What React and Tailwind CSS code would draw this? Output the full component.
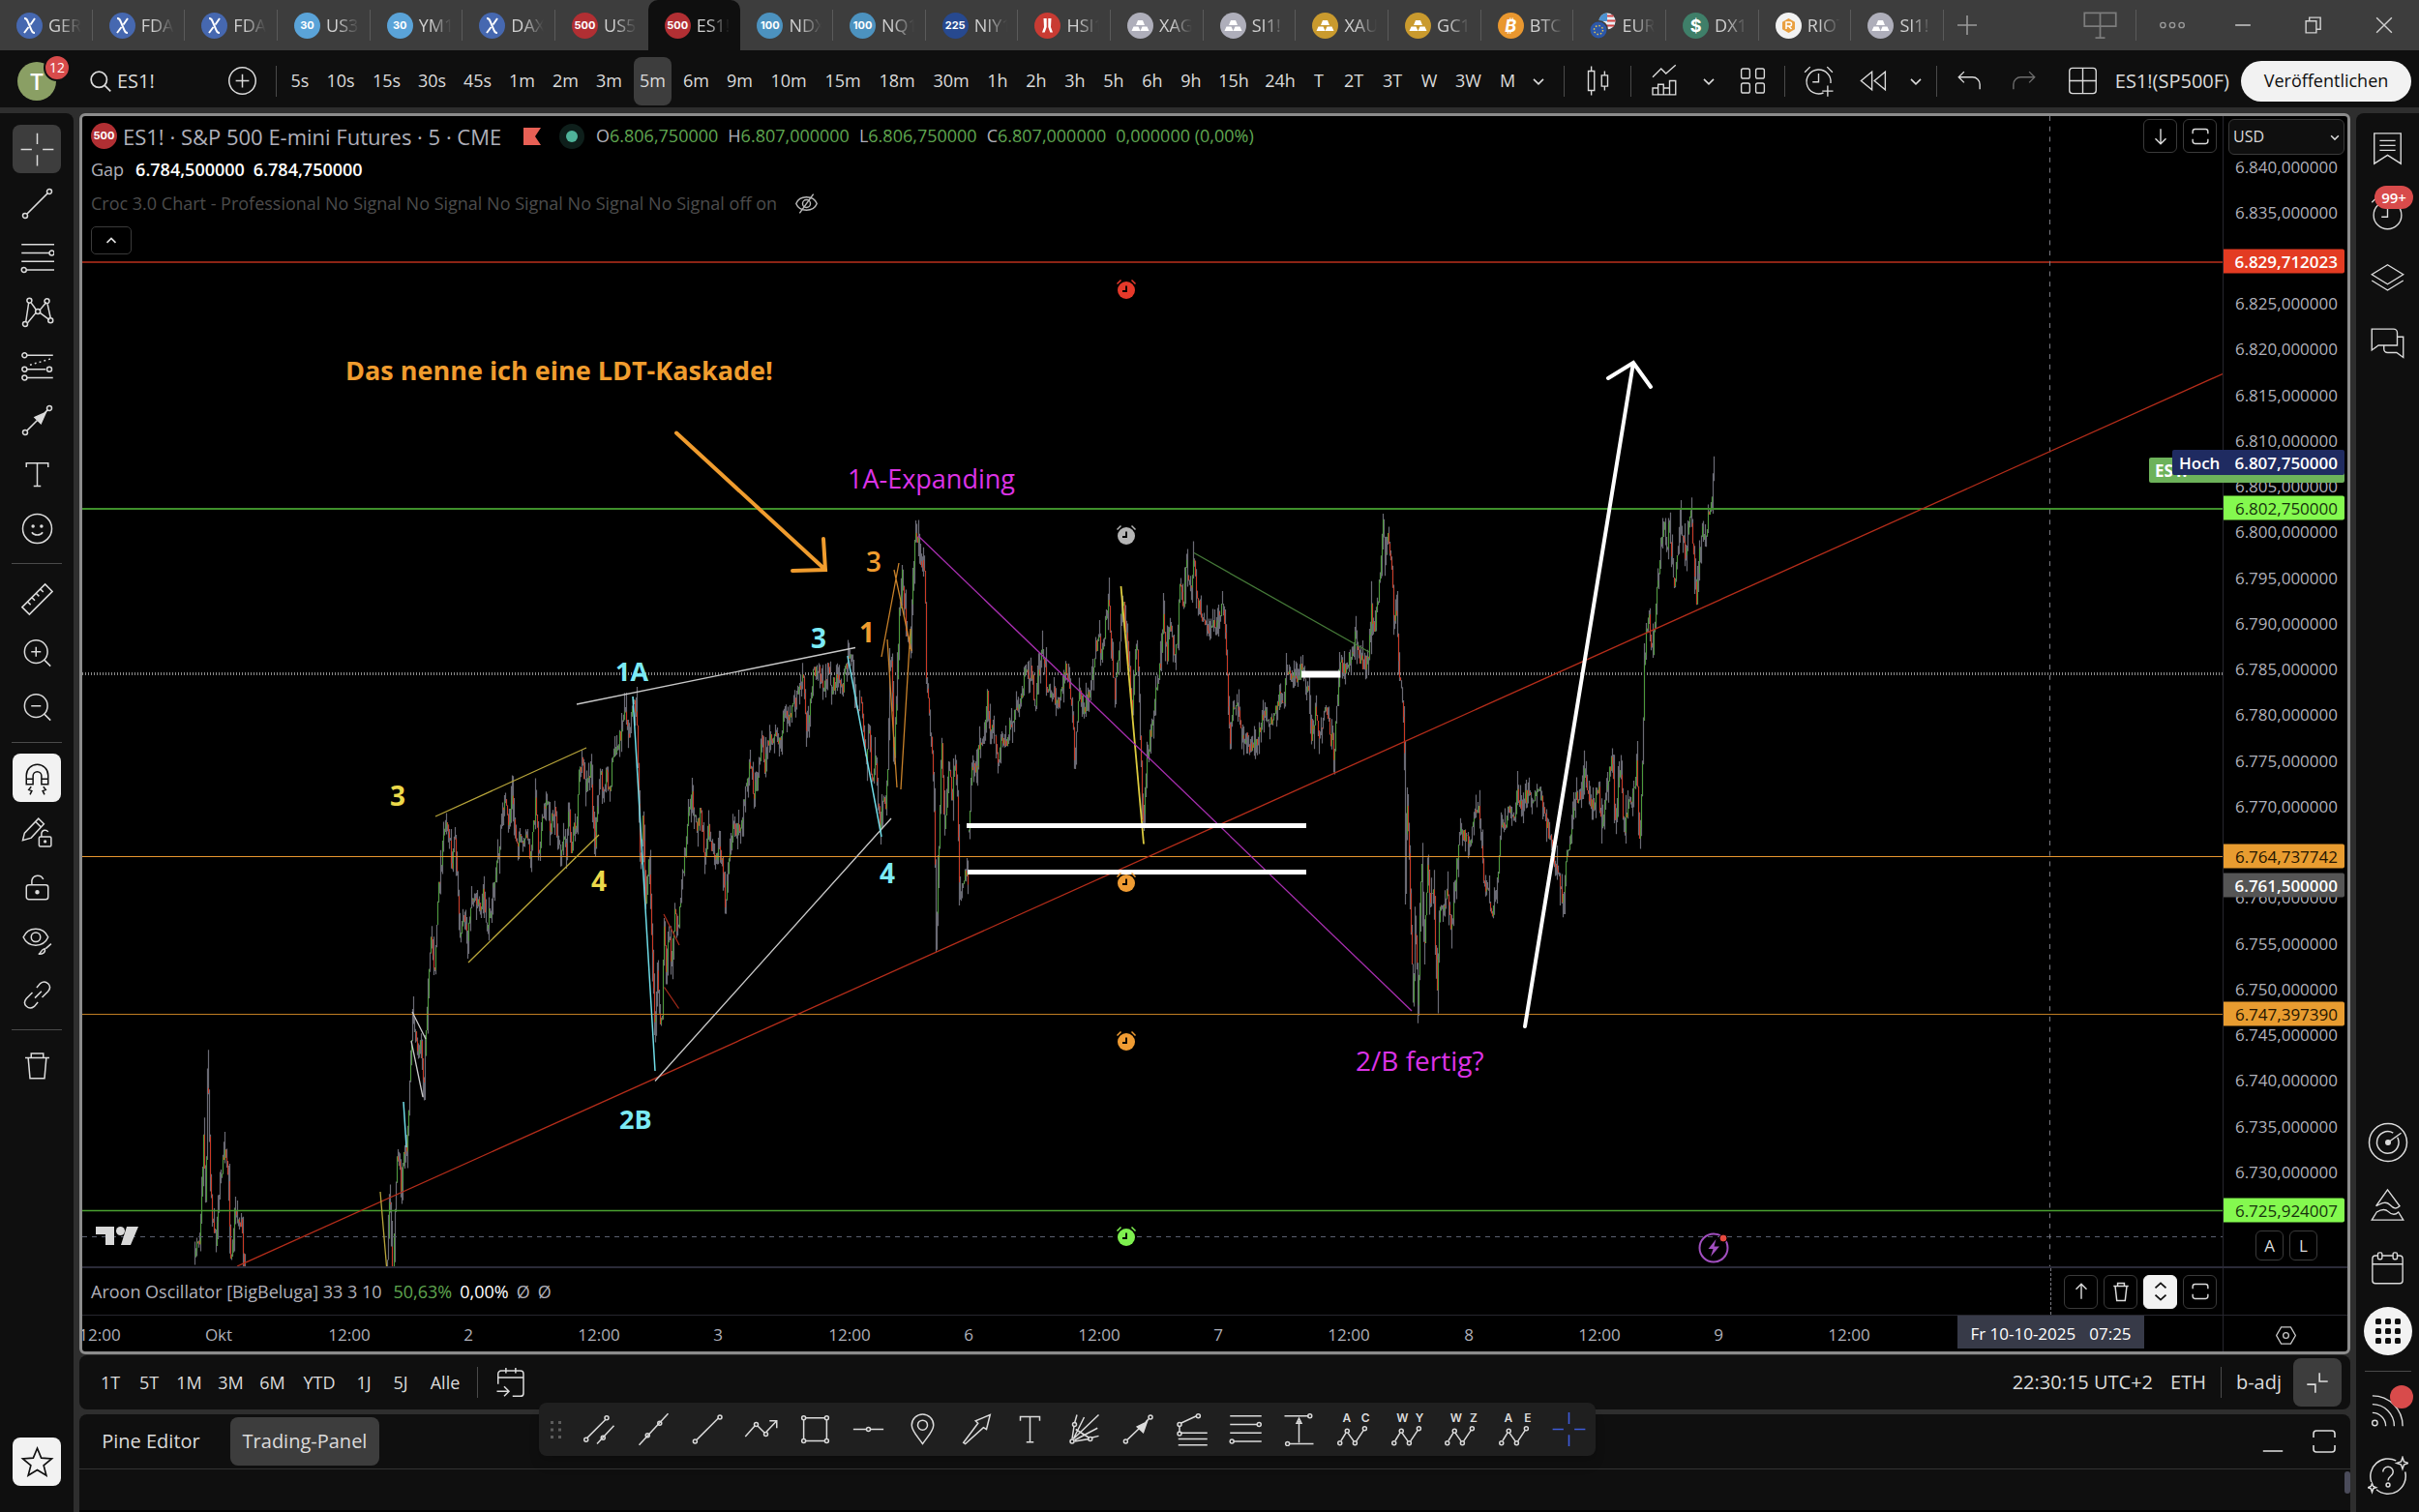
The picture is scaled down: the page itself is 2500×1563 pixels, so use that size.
import React from "react";

/* ---------- small helpers ---------- */

function Ico({ children, size = "size-[35px]", w = 1.1, className = "" }) {
  return (
    <svg viewBox="0 0 28 28" className={`shrink-0 ${size} ${className}`} fill="none" stroke="currentColor" strokeWidth={w} aria-hidden="true">
      {children}
    </svg>
  );
}

const Dot = ({ x, y, r = 1.6 }) => <circle cx={x} cy={y} r={r} />;

const Chevron = () => (
  <Ico size="size-[20px]" w={2.2}>
    <path d="M7 11l7 7 7-7" />
  </Ico>
);

const Bar = ({ className = "" }) => <div className={`h-8 w-px shrink-0 bg-[#4a4a4a] ${className}`} />;

/* ---------- symbol logos ---------- */

function Badge({ kind }) {
  const numbers = {
    "30": "bg-[#5aa3d8]",
    "500": "bg-[#b12f33]",
    "100": "bg-[#4c92bf]",
    "225": "bg-[#27498f]",
  };
  const base = "flex size-[27px] shrink-0 items-center justify-center rounded-full text-white";
  if (numbers[kind]) {
    return <span className={`${base} ${numbers[kind]} font-['Inter',sans-serif] text-[11px] font-bold`}>{kind}</span>;
  }
  if (kind === "x") {
    return (
      <span className={`${base} bg-[#4668b0]`}>
        <svg viewBox="0 0 27 27" className="size-[27px]" fill="none" stroke="#fff" strokeWidth="2" aria-hidden="true">
          <path d="M8 6c3 0 3 2 5.500 7.500S16 21 19 21M19 6l-4.500 6.500M12.500 15L8 21" />
        </svg>
      </span>
    );
  }
  if (kind === "silver" || kind === "gold") {
    return (
      <span className={`${base} ${kind === "gold" ? "bg-[#c99a2e]" : "bg-[#aeaeba]"}`}>
        <svg viewBox="0 0 27 27" className="size-[27px]" fill="#fff" aria-hidden="true">
          <path d="M11 8h5l2 5H9zM6.500 14.500h5l2 4.500h-9zM15.500 14.500h5l2 4.500h-9z" />
        </svg>
      </span>
    );
  }
  if (kind === "hsi") {
    return (
      <span className={`${base} bg-[#c93b33]`}>
        <svg viewBox="0 0 27 27" className="size-[27px]" fill="#fff" aria-hidden="true">
          <path d="M9.500 6h3.200v9l-2 5.500H8l2-5.500zM14.300 6h3.200l-.5 9 2 5.500h-2.700l-2-5.500z" />
        </svg>
      </span>
    );
  }
  if (kind === "btc") {
    return <span className={`${base} bg-[#e9972f] font-['Inter',sans-serif] text-[18px] font-bold italic`}>₿</span>;
  }
  if (kind === "dx") {
    return <span className={`${base} bg-[#3f7f69] font-['Inter',sans-serif] text-[18px] font-bold`}>$</span>;
  }
  if (kind === "riot") {
    return (
      <span className={`${base} bg-[#f2f2f2]`}>
        <svg viewBox="0 0 27 27" className="size-[27px]" fill="none" aria-hidden="true">
          <path d="M13.500 6l6.500 3.700v7.600L13.500 21 7 17.300V9.700z" fill="#e9a040" />
          <path d="M11 17v-7h3.500a2 2 0 010 4H11m2.500 0l3 3" stroke="#fff" strokeWidth="1.500" />
        </svg>
      </span>
    );
  }
  return (
    <svg viewBox="0 0 27 27" className="size-[27px] shrink-0" aria-hidden="true">
      <circle cx="18" cy="9" r="8.500" fill="#e9eef5" />
      <path d="M18 .5a8.500 8.500 0 00-8.500 8.500H18z" fill="#4c92d0" />
      <path d="M18 3.500h6.500M18 8.500h8.500M11 13.500h14" stroke="#d34545" strokeWidth="2" />
      <circle cx="9.500" cy="17.500" r="9.500" fill="#3d3d3d" />
      <circle cx="9" cy="18" r="8.500" fill="#2c57a8" />
      <circle cx="9" cy="18" r="4.500" fill="none" stroke="#e8c84f" strokeWidth="1.500" strokeDasharray="1.500 2" />
    </svg>
  );
}

const tabs = [
  ["x", "GER4"], ["x", "FDAX"], ["x", "FDAX"], ["30", "US30"], ["30", "YM1!"], ["x", "DAX"], ["500", "US50"],
  ["500", "ES1!"], ["100", "NDX"], ["100", "NQ1!"], ["225", "NIY1"], ["hsi", "HSI1"], ["silver", "XAGU"],
  ["silver", "SI1!"], ["gold", "XAUU"], ["gold", "GC1!"], ["btc", "BTCU"], ["eur", "EURU"], ["dx", "DX1!"],
  ["riot", "RIOT"], ["silver", "SI1!"],
];

function TabStrip() {
  return (
    <header className="flex h-[52px] shrink-0 bg-[#3d3d3d]">
      <nav className="flex min-w-0 flex-1">
        {tabs.map(([kind, name], i) => {
          const active = i === 7;
          const rule = !active && i !== 6;
          return (
            <button
              key={i}
              className={`flex min-w-0 flex-1 items-center ${active ? "rounded-t-[10px] bg-[#0f0f0f]" : ""}`}
            >
              <span className="flex min-w-0 flex-1 items-center gap-[6px] pl-[17px]">
                <Badge kind={kind} />
                <span className="w-[34px] overflow-hidden text-left text-[18px] font-medium text-[#d0d0d0] [mask-image:linear-gradient(to_right,black_35%,transparent)]">
                  {name}
                </span>
              </span>
              <span className={`h-8 w-px ${rule ? "bg-[#5a5a5a]" : ""}`} />
            </button>
          );
        })}
      </nav>
      <div className="flex w-[491px] items-center text-[#9a9a9a]">
        <button aria-label="Neuer Tab" className="flex w-12 justify-center">
          <Ico size="size-[28px]" w={1.6}><path d="M14 4v20M4 14h20" /></Ico>
        </button>
        <div className="flex-1" />
        <button aria-label="Fenster" className="flex w-[73px] justify-center">
          <Ico className="text-[#7c7c7c]" w={1.4}><path d="M1 3.500h26v11H1zM14 3.500V24M10 24h8" /></Ico>
        </button>
        <Bar className="bg-[#5a5a5a]" />
        <button aria-label="Mehr" className="flex w-[73px] justify-center">
          <Ico size="size-[30px]" w={1.3}><circle cx="5" cy="14" r="2.500" /><circle cx="14" cy="14" r="2.500" /><circle cx="23" cy="14" r="2.500" /></Ico>
        </button>
        <button aria-label="Minimieren" className="flex w-[73px] justify-center text-[#d0d0d0]">
          <Ico size="size-[20px]" w={2}><path d="M3 14h22" /></Ico>
        </button>
        <button aria-label="Wiederherstellen" className="flex w-[73px] justify-center text-[#d0d0d0]">
          <Ico size="size-[20px]" w={2}><path d="M3 8h15v17H3zM8 8V3h16v17h-6" /></Ico>
        </button>
        <button aria-label="Schließen" className="flex w-[73px] justify-center text-[#d0d0d0]">
          <Ico size="size-[20px]" w={2}><path d="M3 3l22 22M25 3L3 25" /></Ico>
        </button>
      </div>
    </header>
  );
}

/* ---------- main toolbar ---------- */

const intervals = [
  ["5s", "w-9"], ["10s", "w-12"], ["15s", "w-[47px]"], ["30s", "w-[47px]"], ["45s", "w-[47px]"],
  ["1m", "w-[45px]"], ["2m", "w-[45px]"], ["3m", "w-[45px]"], ["5m", "w-[45px]"], ["6m", "w-[45px]"], ["9m", "w-[45px]"],
  ["10m", "w-14"], ["15m", "w-14"], ["18m", "w-14"], ["30m", "w-14"],
  ["1h", "w-10"], ["2h", "w-10"], ["3h", "w-10"], ["5h", "w-10"], ["6h", "w-10"], ["9h", "w-10"],
  ["15h", "w-12"], ["24h", "w-12"], ["T", "w-8"], ["2T", "w-10"], ["3T", "w-10"], ["W", "w-9"], ["3W", "w-[45px]"], ["M", "w-9"],
];

function Toolbar() {
  return (
    <div className="flex h-[59px] shrink-0 items-center bg-[#0f0f0f] pr-2 pt-[4px] text-[18px] font-medium text-[#dbdbdb]">
      <button aria-label="Profil" className="relative ml-[18px] flex size-10 shrink-0 items-center justify-center rounded-full bg-[#8a9f64] text-[24px] font-semibold text-white">
        T
        <span className="absolute -top-[8px] left-[27px] flex size-[28px] items-center justify-center rounded-full border-2 border-[#0f0f0f] bg-[#d84b4b] text-[14px] font-normal">
          12
        </span>
      </button>
      <button className="ml-[34px] flex w-[140px] items-center gap-[5px] text-left text-[20px]">
        <Ico size="size-[24px]" w={2}><circle cx="12" cy="12" r="9.500" /><path d="M19 19l7 7" /></Ico>
        ES1!
      </button>
      <button aria-label="Symbol vergleichen" className="flex w-9 justify-center">
        <Ico w={1.2}><circle cx="14" cy="14" r="11" /><path d="M14 8.500v11M8.500 14h11" /></Ico>
      </button>
      <Bar className="ml-[17px] mr-[6px]" />
      {intervals.map(([t, w]) => (
        <button key={t} className={`flex h-[50px] shrink-0 items-center justify-center ${w}`}>
          {t === "5m" ? (
            <span className="flex h-full w-[39px] items-center justify-center rounded-[8px] bg-[#3d3d3d]">{t}</span>
          ) : t}
        </button>
      ))}
      <button aria-label="Weitere Intervalle" className="flex w-7 justify-center"><Chevron /></button>
      <Bar className="ml-[12px]" />
      <button aria-label="Charttyp" className="flex w-[68px] justify-center">
        <Ico><path d="M6 6h5v16H6zM8.500 2v4M8.500 22v4M17 9.500h5v9h-5zM19.500 6v3.500M19.500 18.500V22" /></Ico>
      </button>
      <Bar />
      <button aria-label="Indikatoren" className="flex w-[68px] justify-center">
        <Ico><path d="M4 11l7-7 4 4 8-7M4 25.500V20h4.500v5.500zM8.500 25.500V17H13v8.500M13 20h5v5.500M18 25.500V14h5v11.500H4" /></Ico>
      </button>
      <button aria-label="Indikatorvorlagen" className="flex w-6 justify-center"><Chevron /></button>
      <button aria-label="Layout-Raster" className="flex w-[66px] justify-center">
        <Ico><rect x="4.500" y="4" width="7" height="8" rx="1.500" /><rect x="16.500" y="4" width="7" height="8" rx="1.500" /><rect x="4.500" y="16" width="7" height="8" rx="1.500" /><rect x="16.500" y="16" width="7" height="8" rx="1.500" /></Ico>
      </button>
      <Bar />
      <button aria-label="Alarm" className="flex w-[68px] justify-center">
        <Ico><path d="M18 24a10 10 0 116-8M14 8v7H9M2.500 7L7 2.500M25.500 7L21 2.500M21.500 18v9M17 22.500h9" /></Ico>
      </button>
      <button aria-label="Replay" className="flex w-[46px] justify-center">
        <Ico><path d="M12.500 6.500v15l-9-7.500zM23.500 6.500v15L14.500 14z" /></Ico>
      </button>
      <button aria-label="Replay-Optionen" className="flex w-[42px] justify-center"><Chevron /></button>
      <Bar />
      <button aria-label="Rückgängig" className="flex w-[66px] justify-center">
        <Ico><path d="M9.500 6.500L5 11l4.500 4.500M5 11h11.500a6 6 0 016 6v4" /></Ico>
      </button>
      <button aria-label="Wiederholen" className="flex w-[46px] justify-center text-[#6e6e6e]">
        <Ico><path d="M18.500 6.500L23 11l-4.500 4.500M23 11H11.500a6 6 0 00-6 6v4" /></Ico>
      </button>
      <div className="flex-1" />
      <button aria-label="Layout" className="flex w-[50px] justify-center">
        <Ico><rect x="3" y="3.500" width="22" height="21" rx="2.500" /><path d="M14 3.500v21M3 14h22" /></Ico>
      </button>
      <button className="ml-[8px] mr-3 text-[20px]">ES1!(SP500F)</button>
      <button className="h-[42px] w-[176px] rounded-full bg-[#f2f2f2] text-[18px] font-medium text-[#0f0f0f]">Veröffentlichen</button>
    </div>
  );
}

/* ---------- left drawing rail ---------- */

const railGroups = [
  [
    ["Fadenkreuz", <path d="M14 .5v9M14 18.500v9M.5 14h9M18.500 14h9" />, "dark"],
    ["Trendlinie", <><path d="M5.500 22.500L22.500 5.500" /><Dot x={4} y={24} r={2} /><Dot x={24} y={4} r={2} /></>],
    ["Fibonacci", <><path d="M1 3h27M1 10h23M1 17h27M5 24h23" /><Dot x={26} y={10} r={2} /><Dot x={3} y={24} r={2} /></>],
    ["Muster", <><path d="M4.500 22.500L7 6M9 6.500L13 12M16 12.500L21.500 6M22.500 7.500L25 19M6 23l7-8.500M16 14.500l8 6" /><Dot x={4} y={24} r={2} /><Dot x={7.500} y={4.500} r={2} /><Dot x={14.500} y={13.500} r={2} /><Dot x={22} y={5} r={2} /><Dot x={25} y={21} r={2} /></>],
    ["Prognose", <><path d="M5 5h22M5 16.500h16M5 23.500h22" /><path d="M8 13l17-5" strokeDasharray="1.500 2.500" /><Dot x={3.500} y={5} r={2} /><Dot x={3.500} y={16.500} r={2} /><Dot x={24} y={16.500} r={2} /><Dot x={3.500} y={23.500} r={2} /></>],
    ["Pfeil", <><path d="M5.500 22.500L14 14M20 8l2.500-2.500" /><path d="M12 11.500l9-4-4 9z" fill="currentColor" /><Dot x={4} y={24} r={2} /><Dot x={24} y={4} r={2} /></>],
    ["Text", <path d="M5 8V4.500h18V8M14 4.500v19M11 23.500h6" />],
    ["Emoji", <><circle cx="14" cy="14" r="12" /><path d="M9.500 17c2 3 7 3 9 0" /><circle cx="10.500" cy="12" r=".8" fill="currentColor" /><circle cx="17.500" cy="12" r=".8" fill="currentColor" /></>],
  ],
  [
    ["Messen", <path d="M1.500 20.500L20.500 1.500l6 6-19 19zM6 16l2.500 2.500M9.500 12.500L12 15M13 9l2.500 2.500M16.500 5.500L19 8" />],
    ["Vergrößern", <><circle cx="13" cy="12.500" r="9.500" /><path d="M20 19.500l5 5M13 8.500v8M9 12.500h8" /></>],
    ["Verkleinern", <><circle cx="13" cy="12.500" r="9.500" /><path d="M20 19.500l5 5M9 12.500h8" /></>],
  ],
  [
    ["Magnet", <path d="M5 19v-7.500a9 9 0 0118 0V19h-5.500v-7a3.500 3.500 0 00-7 0v7zM5 14.500h5.500M17.500 14.500H23M9 21l-2 2.500 2.500 1-1.500 3M19 21l2 2.500-2.500 1 1.500 3" />, "light"],
    ["Zeichenmodus", <><path d="M2 20.500l1.500-6L15 2.500l4.500 4.500L9 18.500zM12.500 5l4.500 4.500" /><rect x="15.500" y="17.500" width="10" height="8" rx="1" /><path d="M17.500 17.500v-2.500a3 3 0 015.500-1.500" /><circle cx="20.500" cy="21.500" r=".7" fill="currentColor" /></>],
    ["Sperren", <><rect x="5" y="12.500" width="18" height="12" rx="2" /><path d="M9.500 12.500V9a5 5 0 019.500-1" /><circle cx="14" cy="18.500" r="1.200" fill="currentColor" /></>],
    ["Ausblenden", <><path d="M2.500 11C6.500 2 19 2 23 11c-4 9-16.500 9-20.500 0z" /><circle cx="12.800" cy="11" r="3.800" /><path d="M15 25c2 0 2-4 5-4.500 1.500 3-2 5-5 4.500zM21 20.500l4.500-4" /></>],
    ["Link", <path d="M12 16.500l5.500-5.500M10 12l-5 5c-4 5 2 10 6.500 6.500L14.500 20M18 16l5-5c4-5-2-10-6.500-6.500L13.500 8" />],
  ],
  [["Löschen", <path d="M4 7.500h20M9 7.500V4h10v3.500M6.500 7.500l1.500 17h12l1.500-17" />]],
];

function LeftRail() {
  return (
    <aside className="flex w-[76px] shrink-0 flex-col items-center rounded-tr-[8px] bg-[#0f0f0f] pt-3 text-[#dbdbdb]">
      {railGroups.map((group, g) => (
        <React.Fragment key={g}>
          {g > 0 && <div className="my-[11px] h-px w-[52px] bg-[#4a4a4a]" />}
          <div className="flex flex-col gap-[6px]">
            {group.map(([label, art, tone]) => (
              <button
                key={label}
                aria-label={label}
                className={`flex size-[50px] items-center justify-center rounded-[8px] ${
                  tone === "dark" ? "bg-[#3d3d3d]" : tone === "light" ? "bg-[#f2f2f2] text-[#0f0f0f]" : ""
                }`}
              >
                <Ico w={1.2}>{art}</Ico>
              </button>
            ))}
          </div>
        </React.Fragment>
      ))}
      <div className="flex-1" />
      <button aria-label="Favoriten" className="mb-[27px] flex size-[50px] items-center justify-center rounded-[8px] bg-[#f2f2f2] text-[#0f0f0f]">
        <Ico w={1.3}><path d="M14 2.500l3.300 8 8.700.6-6.700 5.500 2.200 8.400L14 20.400 6.500 25l2.200-8.400L2 11.100l8.700-.6z" /></Ico>
      </button>
    </aside>
  );
}

/* ---------- right widget rail ---------- */

function RightRail() {
  const cell = "relative flex w-full items-center justify-center";
  return (
    <aside className="flex w-[65px] shrink-0 flex-col items-center rounded-tl-[8px] bg-[#0f0f0f] text-[#dbdbdb]">
      <button aria-label="Watchlist" className={`${cell} mt-[3px] h-[67px]`}>
        <Ico><path d="M3 1.500h22v25l-11-7-11 7zM7.500 7.500h13M7.500 11.500h13M7.500 15.500h13" /></Ico>
      </button>
      <button aria-label="Alarme" className={`${cell} h-[67px]`}>
        <Ico><circle cx="14" cy="15.500" r="11.500" /><path d="M14 9v8H9M1 5l4.500-4.500" /></Ico>
        <span className="absolute left-[19px] top-[5px] flex h-[24px] w-[40px] items-center justify-center rounded-full bg-[#d84b4b] text-[15px] font-semibold text-white">99+</span>
      </button>
      <button aria-label="Objektbaum" className={`${cell} h-[67px]`}>
        <Ico><path d="M14 3L27 11l-13 8L1 11zM1 16l13 8 13-8" /></Ico>
      </button>
      <button aria-label="Chats" className={`${cell} h-[67px]`}>
        <Ico><path d="M1 2.500h18a3 3 0 013 3V16H6.500L1 20zM22 9h5v17l-5.500-4H14a3 3 0 01-3-3v-3" /></Ico>
      </button>
      <div className="flex-1" />
      <button aria-label="Screener" className={`${cell} h-[65px]`}>
        <Ico size="size-[42px]" w={1}><circle cx="14" cy="14" r="13" /><path d="M20.500 10.500A7.500 7.500 0 1117.500 7.400M14 14l9-6.500" /><circle cx="14" cy="14" r="1.500" fill="currentColor" /></Ico>
      </button>
      <button aria-label="Pine" className={`${cell} h-[65px]`}>
        <Ico><path d="M14 1.500L24 15c-3 3-5 2-8-1s-6-2-11.500 1zM5 20L1 26.500h26L23 20c-3 3-6 2-8.500-.5S9 17.500 5 20z" /></Ico>
      </button>
      <button aria-label="Kalender" className={`${cell} h-[65px]`}>
        <Ico><rect x="1.500" y="4" width="25" height="23" rx="2.500" /><path d="M1.500 11h25" /><rect x="6" y="1.500" width="3.500" height="5.500" rx="1.200" fill="#0f0f0f" /><rect x="18.500" y="1.500" width="3.500" height="5.500" rx="1.200" fill="#0f0f0f" /></Ico>
      </button>
      <button aria-label="Produkte" className={`${cell} h-[65px]`}>
        <span className="flex size-[50px] items-center justify-center rounded-full bg-[#f2f2f2] text-[#0f0f0f]">
          <svg viewBox="0 0 28 28" className="size-[28px]" fill="currentColor" aria-hidden="true">
            {[1, 11, 21].map((y) => [1, 11, 21].map((x) => <rect key={`${x}-${y}`} x={x} y={y} width="6" height="6" rx="1.500" />))}
          </svg>
        </span>
      </button>
      <div className="mb-[10px] mt-[9px] h-px w-12 bg-[#4a4a4a]" />
      <button aria-label="Feed" className={`${cell} h-[60px]`}>
        <Ico><circle cx="3.500" cy="24" r="2.200" /><path d="M1.500 15.500a11 11 0 0111 11M1.500 8.500a18 18 0 0118 18M1.500 1.500a25 25 0 0125 25" /></Ico>
        <span className="absolute left-[35px] top-[4px] size-[24px] rounded-full bg-[#d84b4b]" />
      </button>
      <button aria-label="Hilfe" className={`${cell} h-[75px]`}>
        <Ico size="size-[42px]" w={1}>
          <path d="M19.500 3.200A12.200 12.200 0 002.500 18M6 23.200A12.200 12.200 0 0025.800 11" />
          <path d="M10.500 11a3.500 3.500 0 117 0c0 3-3.500 3-3.500 6" />
          <circle cx="14" cy="20" r="1.300" />
          <path d="M24 1l1 3 3 1-3 1-1 3-1-3-3-1 3-1zM3 19l.8 2 2 .8-2 .8L3 25l-.8-2.400-2-.8 2-.8z" />
        </Ico>
      </button>
    </aside>
  );
}

/* ---------- price series ---------- */

const leg = (ox, oy, pts) => pts.map(([x, y]) => [ox + x / 2.529, oy + y / 2.178]);

const legs = [
  leg(180, 600, [[52,1540],[56,1480],[65,1480],[72,1320],[75,1245],[80,1400],[84,1200],[86,1057],[88,1200],[92,1320],[97,1420],[107,1490],[117,1350],[130,1290],[140,1350],[146,1530],[157,1410],[165,1440],[175,1450],[181,1544]]),
  leg(180, 600, [[556,1544],[563,1360],[567,1544]]),
  leg(180, 600, [[572,1544],[582,1300],[588,1290],[592,1375],[600,1290],[608,1270],[615,1130],[622,980],[630,1010],[640,1075],[645,1020],[652,1140],[660,960],[672,800],[680,880],[690,700],[700,610],[710,530],[718,560],[725,650],[733,560],[740,680],[747,815],[758,760],[768,800],[775,720],[785,705],[795,730],[800,760],[808,690],[815,790],[830,720],[845,630],[855,550],[863,482],[873,560],[882,480],[893,580],[905,590],[915,600],[922,560],[930,635],[945,490],[952,615],[960,560],[973,480],[982,560],[993,515],[1003,600],[1015,605],[1020,560],[1025,630],[1030,500],[1037,600],[1045,560],[1052,540],[1057,440],[1065,415],[1075,470],[1088,430],[1100,600],[1112,430],[1120,465],[1130,430],[1138,485],[1145,400],[1155,385],[1165,350],[1178,285],[1190,350],[1198,262],[1208,300],[1214,480],[1218,650],[1225,520],[1232,740],[1240,620],[1248,800],[1256,1040],[1262,860],[1268,1000],[1275,980],[1280,760],[1286,890],[1292,790],[1300,860],[1308,740],[1315,800],[1325,700],[1335,620],[1345,520],[1353,485],[1365,560],[1375,520],[1388,640],[1396,540],[1405,600],[1415,635],[1425,600],[1432,630],[1440,740],[1450,620],[1460,560],[1475,560],[1485,530],[1495,460],[1505,405],[1515,480],[1525,440],[1535,350],[1543,420],[1555,350],[1566,372]])
    .concat(leg(780, 400, [[2,890],[10,830],[18,790],[26,850],[36,800],[44,825],[52,785],[68,795],[75,730],[90,745],[105,710],[120,670],[127,655],[135,790],[145,700],[152,645],[165,640],[180,680],[190,635],[200,680],[215,655],[230,675],[240,620],[248,592],[255,640],[265,720],[280,710],[290,850],[298,760],[305,890],[315,840],[322,940],[328,1000],[335,930],[342,965],[348,820],[352,640],[358,600],[363,850],[370,700],[377,520],[385,425],[395,540],[405,590],[410,480],[418,350],[427,335],[435,390],[445,430],[448,660],[455,730],[463,810],[470,1000],[473,1272],[480,1060],[488,790],[495,1010],[508,860],[515,930],[523,850],[530,950],[535,1140],[543,1120],[550,1085],[556,1105]])),
  leg(780, 400, [[560,1000],[565,880],[572,840],[580,860],[590,790],[600,790],[608,680],[615,770],[625,780],[635,840],[645,790],[655,810],[665,760],[680,740],[695,720],[705,650],[715,650],[725,640],[732,730],[740,655],[752,595],[765,680],[780,690],[795,710],[805,670],[813,630],[825,690],[832,730],[836,860],[845,720],[850,680],[860,730],[870,700],[880,670],[890,590],[900,560],[907,610],[915,545],[925,480],[933,610],[942,690],[952,600],[961,470],[970,540],[980,640],[988,720],[998,570],[1005,700],[1010,840],[1016,1000],[1022,870],[1033,790],[1042,730],[1050,680],[1060,630],[1068,510],[1078,610],[1085,520],[1095,590],[1105,580],[1112,430],[1120,500],[1128,395],[1138,460],[1148,395],[1158,480],[1168,510],[1180,530],[1188,570],[1200,530],[1210,530],[1220,490],[1228,530],[1235,650],[1242,800],[1252,720],[1262,715],[1272,780],[1285,790],[1298,820],[1310,800],[1322,770],[1332,720],[1345,765],[1358,740],[1370,700],[1382,720],[1392,625],[1402,655],[1412,635],[1418,675],[1430,630]])
    .concat(leg(1300, 400, [[118,640],[127,680],[135,700],[140,800],[150,730],[160,795],[172,745],[182,735],[190,800],[195,790],[199,850],[205,740],[215,630],[230,635],[245,600],[257,555],[262,605],[275,620],[288,625],[297,505],[305,545],[315,480],[322,390],[327,285],[333,390],[340,315],[345,380],[352,430],[356,545],[362,490],[370,650],[380,720],[383,830],[385,1165],[390,930],[398,1120],[403,1300],[406,1395],[412,1190],[419,1400],[424,1180],[429,1050],[435,1300],[443,1070],[452,1170],[460,1105],[465,1280],[469,1350],[475,1180],[485,1190],[495,1130],[505,1230],[513,1150],[520,1070],[528,990],[540,1015],[555,1030],[565,970],[575,945],[582,980],[590,1110],[600,1130],[613,1180],[625,1130],[635,1000],[645,980],[660,955],[672,980],[678,900],[688,955],[700,920],[715,925],[730,905],[745,935],[755,990],[770,1030],[780,1085],[798,1160],[806,1060],[818,1010],[830,930],[845,910],[857,860],[865,940],[878,940],[890,905],[900,990],[910,910],[925,830],[935,980],[948,850],[958,1010],[968,930],[980,920],[990,850],[998,1040],[1005,850],[1010,640],[1015,540],[1022,510],[1032,610],[1040,490],[1050,390],[1062,310],[1070,360],[1075,300],[1088,445],[1098,360],[1105,295],[1118,390],[1132,280],[1140,400],[1147,478],[1155,370],[1162,315],[1170,360],[1178,280],[1185,270],[1190,200],[1192,172]])),
];

function buildBars() {
  let seed = 7;
  const rnd = () => {
    seed = (seed * 16807) % 2147483647;
    return seed / 2147483647;
  };
  let wick = "";
  let up = "";
  let down = "";
  legs.forEach((pts) => {
    let k = 0;
    const end = pts[pts.length - 1][0];
    let prev = pts[0][1];
    for (let x = pts[0][0]; x <= end + 1; x += 1) {
      let turn = null;
      while (k < pts.length - 2 && pts[k + 1][0] < x) {
        k += 1;
        turn = pts[k][1];
      }
      const [x0, y0] = pts[k];
      const [x1, y1] = pts[k + 1];
      const along = Math.min(x, x1) - x0;
      const y = y0 + ((y1 - y0) * along) / Math.max(x1 - x0, 0.1) + (rnd() - 0.5) * 16;
      const px = Math.round(x) + 0.5;
      const hi = Math.min(prev, y);
      const lo = Math.max(prev, y);
      const steep = Math.min(Math.abs(y1 - y0) * 0.15, 14);
      let a = hi - rnd() ** 3 * (16 + steep);
      let b = lo + rnd() ** 3 * (16 + steep);
      if (turn !== null) {
        a = Math.min(a, turn);
        b = Math.max(b, turn);
      }
      wick += `M${px} ${a.toFixed(1)}V${b.toFixed(1)}`;
      const body = `M${px} ${hi.toFixed(1)}V${lo.toFixed(1)}`;
      if (rnd() > 0.25) {
        if (y < prev) up += body;
        else down += body;
      }
      prev = y;
    }
  });
  return { wick, up, down };
}

const bars = buildBars();

const trendLines = [
  ["#b52d1a", 1.3, "M245 1309L2297 386.500"],
  ["#b8a53a", 1.3, "M450 844L606 773M484 995L619 863M393 1232L399.500 1309"],
  ["#dccb3e", 1.8, "M1158.500 606L1182 872.500"],
  ["#c9c9c9", 1.3, "M596 728L884 669.500M677 1117.500L921 846M426 1046L440 1074M425 1076L437 1134"],
  ["#6fdbe6", 1.5, "M654 720L677 1107M876 678L911 865M417 1139L420 1186"],
  ["#c9822a", 1.3, "M924 589L942 673M929 582L911 679M917 661L927 814M941 650L931 816"],
  ["#a82fb0", 1.3, "M949 554L1459 1045"],
  ["#457a38", 1.3, "M1234 571.500L1415 674"],
  ["#a32a1a", 1.3, "M686 945L702 977M686.500 1020.500L701.500 1042.500"],
];

const alarms = [
  ["text-[#e6392a]", 300],
  ["text-[#b5b5b5]", 554],
  ["text-[#f09c33]", 913],
  ["text-[#f09c33]", 1077],
  ["text-[#7ef04f]", 1279],
];

function ChartArt() {
  return (
    <svg viewBox="85 120 2212 1189" preserveAspectRatio="none" className="absolute inset-0 size-full" fill="none" aria-hidden="true">
      <path d="M85 271H2297" stroke="#8c2415" strokeWidth="2" />
      <path d="M85 696.500H2297" stroke="#8a8a8a" strokeWidth="3" strokeDasharray="1 2" />
      <path d={bars.wick} stroke="#7c7c88" strokeWidth="1.200" opacity=".85" />
      <path d={bars.up} stroke="#4c9a3a" strokeWidth="1" />
      <path d={bars.down} stroke="#cc3a25" strokeWidth="1" />
      <path d="M85 526H2297" stroke="#3f8f2b" strokeWidth="2" />
      <path d="M85 885.500H2297" stroke="#e8962f" />
      <path d="M85 1048.500H2297" stroke="#c07d22" />
      <path d="M85 1251.500H2297" stroke="#4aa030" strokeWidth="1.500" />
      <path d="M85 1278.500H2297" stroke="#5a5f70" strokeDasharray="5 5" />
      <path d="M2118.500 120V1309" stroke="#7a7a82" strokeDasharray="5 5.700" />
      {trendLines.map(([c, w, d]) => <path key={c} d={d} stroke={c} strokeWidth={w} />)}
      <path d="M999 853.500H1350M1000 901.500H1350" stroke="#fff" strokeWidth="5" />
      <path d="M1345 697H1385" stroke="#fff" strokeWidth="7" />
      <path d="M699 447.500L853 589M819 590L853 589L851 557" stroke="#f09c2e" strokeWidth="4" strokeLinecap="round" />
      <path d="M1576 1061L1688 375M1662 391L1688 375L1706 400" stroke="#fff" strokeWidth="4" strokeLinecap="round" />
      {alarms.map(([c, y]) => (
        <g key={y} className={c} transform={`translate(1164 ${y})`} stroke="currentColor" strokeWidth="1.500">
          <circle r="9" fill="currentColor" stroke="none" />
          <path d="M-9.500 -6.500l4 -4M9.500 -6.500l-4 -4" />
          <path d="M0 -4.500V1H-4" stroke="#000" strokeWidth="1.800" />
        </g>
      ))}
      <g fill="#d8d8d8">
        <path d="M99 1268h19v19h-9v-11h-10zM131 1268h12l-8 19h-10z" />
        <circle cx="124.500" cy="1272.500" r="4.500" />
      </g>
      <circle cx="1771" cy="1290" r="14.500" stroke="#a24fc0" strokeWidth="2" />
      <path d="M1773.500 1281l-8 10h5l-2.500 8 9-10.500h-5.500z" fill="#a24fc0" />
      <circle cx="1781" cy="1280" r="4" fill="#e6493f" stroke="#000" strokeWidth="1" />
    </svg>
  );
}

const notes = [
  ["Das nenne ich eine LDT-Kaskade!", "left-[272px] top-[245px] text-[27px] font-bold text-[#f09c2e]"],
  ["1A-Expanding", "left-[791px] top-[357px] text-[27px] text-[#dc33e6]"],
  ["2/B fertig?", "left-[1316px] top-[958px] text-[28px] text-[#dc33e6]"],
  ["3", "left-[318px] top-[684px] text-[28px] font-bold text-[#ecd94a]"],
  ["4", "left-[526px] top-[772px] text-[28px] font-bold text-[#ecd94a]"],
  ["1A", "left-[551px] top-[556px] text-[27px] font-bold text-[#7ceaf5]"],
  ["2B", "left-[555px] top-[1019px] text-[27px] font-bold text-[#7ceaf5]"],
  ["3", "left-[753px] top-[521px] text-[28px] font-bold text-[#7ceaf5]"],
  ["4", "left-[824px] top-[764px] text-[28px] font-bold text-[#7ceaf5]"],
  ["3", "left-[810px] top-[442px] text-[28px] font-semibold text-[#f09c2e]"],
  ["1", "left-[803px] top-[515px] text-[28px] font-bold text-[#f09c2e]"],
];

/* ---------- chart legend ---------- */

function Legend() {
  const ohlc = [["O", "6.806,750000"], ["H", "6.807,000000"], ["L", "6.806,750000"], ["C", "6.807,000000"]];
  return (
    <div className="relative flex flex-col items-start pl-[9px] pt-[3px] text-[18px] text-[#b0b0ba]">
      <div className="flex h-[35px] items-center whitespace-nowrap">
        <Badge kind="500" />
        <span className="ml-[6px] w-[414px] text-[22px] leading-none">ES1! · S&amp;P 500 E-mini Futures · 5 · CME</span>
        <svg viewBox="0 0 18 18" className="size-[18px]" fill="#e86055" aria-hidden="true"><path d="M0 0h18l-6 9 6 9H0z" /></svg>
        <span className="ml-[19px] mr-[12px] flex size-[26px] items-center justify-center rounded-full bg-[#0e1f1b]">
          <span className="size-[12px] rounded-full bg-[#4fb39a]" />
        </span>
        <span className="flex gap-[10px]">
          {ohlc.map(([k, v]) => <span key={k}>{k}<span className="text-[#5fa650]">{v}</span></span>)}
          <span className="text-[#5fa650]">0,000000 (0,00%)</span>
        </span>
      </div>
      <div className="flex h-[35px] items-center gap-3 whitespace-nowrap">
        Gap <span className="flex gap-[9px] font-semibold text-white"><span>6.784,500000</span><span>6.784,750000</span></span>
      </div>
      <div className="flex h-[35px] items-center gap-[18px] whitespace-nowrap text-[#4c4c4c]">
        Croc 3.0 Chart - Professional No Signal No Signal No Signal No Signal No Signal off on
        <button aria-label="Einblenden" className="text-[#b8b8b8]">
          <Ico size="size-[25px]" w={1.6}><path d="M2 14C6 4 22 4 26 14 22 24 6 24 2 14zM6 25L22 3" /><circle cx="14" cy="14" r="4.500" /></Ico>
        </button>
      </div>
      <button aria-label="Legende einklappen" className="mt-[6px] flex h-[29px] w-[42px] items-center justify-center rounded-[5px] border border-[#3a3a3a] text-[#dbdbdb]">
        <Ico size="size-[18px]" w={2.600}><path d="M7 17l7-7 7 7" /></Ico>
      </button>
    </div>
  );
}

/* ---------- price axis ---------- */

const axisY = (p) => Math.round(51.5 + (6840 - p) * 9.448);
const ticks = [6840, 6835, 6825, 6820, 6815, 6810, 6805, 6800, 6795, 6790, 6785, 6780, 6775, 6770, 6760, 6755, 6750, 6745, 6740, 6735, 6730];
const fmt = (p) => `6.${String(p - 6000)},000000`;

const tags = [
  ["6.829,712023", 150, "bg-[#e33b22] text-white font-semibold"],
  ["6.802,750000", 405, "bg-[#84f94f] text-[#16330c]"],
  ["6.764,737742", 765, "bg-[#e89c30] text-[#241500]"],
  ["6.761,500000", 795, "bg-[#555555] text-white font-semibold"],
  ["6.747,397390", 928, "bg-[#e89c30] text-[#241500]"],
  ["6.725,924007", 1131, "bg-[#84f94f] text-[#16330c]"],
];

function SquareButton({ label, children, light }) {
  return (
    <button
      aria-label={label}
      className={`flex size-[35px] items-center justify-center rounded-[6px] border ${
        light ? "border-[#f2f2f2] bg-[#f2f2f2] text-[#0f0f0f]" : "border-[#3a3a3a] bg-black text-[#dbdbdb]"
      }`}
    >
      {children}
    </button>
  );
}

const Frame = () => (
  <Ico size="size-[22px]" w={1.8}><path d="M4 10.500V7.500a3 3 0 013-3h14a3 3 0 013 3v3M4 17.500v3a3 3 0 003 3h14a3 3 0 003-3v-3" /></Ico>
);

function PriceAxis() {
  return (
    <div className="relative w-[129px] shrink-0 border-l border-[#26262e] pr-[3px] text-[17px] leading-[25px]">
      {ticks.map((p) => (
        <div key={p} className="absolute left-0 right-[10px] -translate-y-1/2 text-right text-[#b0b0ba]" style={{ top: axisY(p) }}>{fmt(p)}</div>
      ))}
      <div className="absolute right-[3px] top-[353px] flex h-[26px] w-[202px] items-center rounded-[2px] bg-[#6db25a] pl-[6px] font-bold text-white">ES1!</div>
      <div className="absolute right-[3px] top-[345px] flex h-[26px] w-[178px] items-center justify-between rounded-[2px] bg-[#1f2b61] pl-[7px] pr-[7px] font-semibold text-white">
        <span>Hoch</span><span>6.807,750000</span>
      </div>
      {tags.map(([t, y, c]) => (
        <div key={t} className={`absolute left-0 right-[3px] -translate-y-1/2 rounded-r-[2px] pr-[7px] text-right ${c}`} style={{ top: y }}>{t}</div>
      ))}
      <div className="relative ml-[5px] mt-[3px] flex items-center">
        <select aria-label="Währung" className="h-[37px] w-full appearance-none rounded-[6px] border border-[#3a3a3a] bg-[#0f0f0f] pl-1 text-[16px] text-[#dbdbdb]">
          <option>USD</option>
        </select>
        <span className="pointer-events-none absolute right-[4px] text-[#dbdbdb]"><Ico size="size-[12px]" w={3.500}><path d="M5 10l9 9 9-9" /></Ico></span>
      </div>
      <div className="absolute bottom-[6px] right-[31px] flex gap-[6px] text-[17px] font-medium text-[#dbdbdb]">
        <button className="h-[31px] w-[29px] rounded-[6px] border border-[#3a3a3a] bg-black">A</button>
        <button className="h-[31px] w-[29px] rounded-[6px] border border-[#3a3a3a] bg-black">L</button>
      </div>
    </div>
  );
}

const times = [
  ["12:00", 103], ["Okt", 226], ["12:00", 361], ["2", 484], ["12:00", 619], ["3", 742], ["12:00", 878], ["6", 1001],
  ["12:00", 1136], ["7", 1259], ["12:00", 1394], ["8", 1518], ["12:00", 1653], ["9", 1776], ["12:00", 1911],
];

function Chart() {
  return (
    <section className="flex flex-1 flex-col overflow-hidden rounded-[6px] border-[3px] border-[#8c8c8c] bg-black">
      <div className="flex flex-1">
        <div className="relative min-w-0 flex-1">
          <ChartArt />
          {notes.map(([t, c], i) => <span key={i} className={`absolute whitespace-nowrap leading-9 ${c}`}>{t}</span>)}
          <Legend />
          <div className="absolute right-[6px] top-[3px] flex gap-[6px]">
            <SquareButton label="Nach unten"><Ico size="size-[22px]" w={1.8}><path d="M14 4v20M7 17l7 7 7-7" /></Ico></SquareButton>
            <SquareButton label="Maximieren"><Frame /></SquareButton>
          </div>
        </div>
        <PriceAxis />
      </div>
      <div className="h-[2px] bg-[#2a2a38]" />
      <div className="flex h-[48px] shrink-0">
        <div className="relative flex flex-1 items-center justify-between pl-[9px] pr-[6px] text-[18px] text-[#b0b0ba]">
          <span className="absolute inset-y-0 right-[177px] border-l border-dashed border-[#7a7a82]" />
          <span className="flex gap-2 leading-[46px]">
            <span className="mr-1">Aroon Oscillator [BigBeluga] 33 3 10</span>
            <span className="text-[#5fa650]">50,63%</span><span className="text-white">0,00%</span><span>Ø</span><span>Ø</span>
          </span>
          <span className="relative flex gap-[6px]">
            <SquareButton label="Nach oben"><Ico size="size-[22px]" w={1.8}><path d="M14 24V4M7 11l7-7 7 7" /></Ico></SquareButton>
            <SquareButton label="Entfernen"><Ico size="size-[24px]" w={1.700}><path d="M5 7.500h18M10 7.500V4h8v3.500M7 7.500L9 25h10l2-17.500" /></Ico></SquareButton>
            <SquareButton label="Ausklappen" light><Ico size="size-[22px]" w={2.200}><path d="M7 9.500L14 3l7 6.500M7 18.500l7 6.500 7-6.500" /></Ico></SquareButton>
            <SquareButton label="Vollbild"><Frame /></SquareButton>
          </span>
        </div>
        <div className="w-[129px] border-l border-[#26262e]" />
      </div>
      <div className="flex h-[38px] shrink-0 border-t border-[#26262e]">
        <div className="relative flex-1 overflow-hidden text-[17px] leading-[40px] text-[#b0b0ba]">
          {times.map(([t, x]) => (
            <span key={x} className="absolute -translate-x-1/2" style={{ left: x - 85 }}>{t}</span>
          ))}
          <span className="absolute right-[81px] top-0 flex h-[34px] w-[193px] items-center justify-center gap-[14px] bg-[#373a48] pt-[4px] font-medium text-white">
            <span>Fr 10-10-2025</span><span>07:25</span>
          </span>
        </div>
        <div className="flex w-[129px] items-center justify-center border-l border-[#26262e] text-[#c8c8c8]">
          <button aria-label="Achseneinstellungen" className="mt-1">
            <Ico size="size-[23px]" w={1.600}><path d="M8 3.500h12L26 14l-6 10.500H8L2 14z" /><circle cx="14" cy="14" r="3.500" /></Ico>
          </button>
        </div>
      </div>
    </section>
  );
}

/* ---------- bottom bars ---------- */

const zig = <><path d="M4 21l4-6.500M9.500 14.500l5 7M16.500 21.500l6-9" /><Dot x={3} y={23} /><Dot x={9} y={13} /><Dot x={15.500} y={23} /><Dot x={23.500} y={11} /></>;

const favourites = [
  ["Parallelkanal", <><path d="M3.500 21.500L19 6M12 26L26 11" /><Dot x={3} y={22.500} /><Dot x={20} y={4.500} /><Dot x={17} y={21} /></>],
  ["Linie", <><path d="M2 27L26 1" /><Dot x={9} y={19} /><Dot x={19} y={9} /></>],
  ["Trendlinie", <><path d="M5 22.500L22.500 5" /><Dot x={3.500} y={24} /><Dot x={24} y={4} /></>],
  ["Pfad", <><path d="M1 20L9 11M11 11l6 6M18.500 16L27 7M21 7h6v6" /><Dot x={10} y={10} /><Dot x={18} y={18} /></>],
  ["Rechteck", <><path d="M6 4.500h16M6 23.500h16M4.500 6v16M23.500 6v16" /><Dot x={4.500} y={4.500} /><Dot x={23.500} y={4.500} /><Dot x={4.500} y={23.500} /><Dot x={23.500} y={23.500} /></>],
  ["Horizontale", <><path d="M1.500 14h10.500M16 14h10.500" /><Dot x={14} y={14} /></>],
  ["Preisnotiz", <><path d="M14 26C9 19 5 15 5 10.500a9 9 0 0118 0C23 15 19 19 14 26z" /><circle cx="14" cy="10.500" r="4" /></>],
  ["Pfeilmarker", <path d="M3 25L15 9l-2-2 12-5-3 12-2.500-1.500L4.500 26z" />],
  ["Text", <path d="M6 7V3.500h16V7M14 3.500v21M11 24.500h6" />],
  ["Gann", <><path d="M4 22L5.500 12M6 9L8 2M5 22L14 4M5 22L26 2M6 23l19-10M7 14l11 7M6 24l12-2M20 21l6-1.500" /><Dot x={4} y={24} /><Dot x={6} y={10} /><Dot x={19} y={22} /></>],
  ["Pfeil", <><path d="M5 22.500L16 12M20 8l2.500-2.500" /><path d="M13 12l8-4-3 8.500z" fill="currentColor" /><Dot x={3.500} y={24} /><Dot x={24} y={4} /></>],
  ["Trend-Fib", <><path d="M5 9l13-6M4 11v6M5 17h22M3 22h24M3 27h24" /><Dot x={19.500} y={3} /><Dot x={4} y={10} /><Dot x={4} y={17.500} /></>],
  ["Fibonacci", <><path d="M1 3h26M1 10h23M1 17h26M4 24h23" /><Dot x={25} y={10} /><Dot x={2.500} y={24} /></>],
  ["Preisspanne", <><path d="M2 3h20M6 26h20M14 7v18M12 9l2-4 2 4z" /><Dot x={23} y={3} /><Dot x={4.500} y={26} /></>],
];

const waves = [["A", "C"], ["W", "Y"], ["W", "Z"], ["A", "E"]];

function FavouriteBar() {
  return (
    <div className="absolute left-[475px] top-[50px] flex h-[55px] w-[1092px] items-center rounded-[8px] bg-[#1f1f1f] text-[#dbdbdb] shadow-lg">
      <span className="flex w-[35px] justify-center">
        <svg viewBox="0 0 12 20" className="h-[20px] w-[12px]" fill="#5c5c5c" aria-hidden="true">
          {[1, 8.500, 16].map((y) => [0, 8].map((x) => <rect key={`${x}-${y}`} x={x} y={y} width="3" height="3" />))}
        </svg>
      </span>
      {favourites.map(([label, art]) => (
        <button key={label} aria-label={label} className="flex flex-1 justify-center"><Ico w={1.200}>{art}</Ico></button>
      ))}
      {waves.map(([a, b]) => (
        <button key={a + b} aria-label={`Wellen ${a}${b}`} className="flex flex-1 flex-col items-center">
          <span className="flex h-[10px] w-[34px] justify-between pl-[6px] font-['Inter',sans-serif] text-[12px] font-semibold leading-[10px]">
            <span>{a}</span><span>{b}</span>
          </span>
          <Ico w={1.200} className="-mt-2 -mb-1">{zig}</Ico>
        </button>
      ))}
      <button aria-label="Fadenkreuz" className="flex flex-1 justify-center text-[#3f5bd8]">
        <Ico w={1.300}><path d="M14 0v9.500M14 18.500V28M.5 14h9M18.500 14h9" /></Ico>
      </button>
    </div>
  );
}

const ranges = [["1T", "w-10"], ["5T", "w-10"], ["1M", "w-[43px]"], ["3M", "w-[43px]"], ["6M", "w-[43px]"], ["YTD", "w-[54px]"], ["1J", "w-[38px]"], ["5J", "w-[38px]"], ["Alle", "w-[54px]"]];

function BottomArea() {
  return (
    <div className="relative shrink-0 text-[20px] text-[#dbdbdb]">
      <div className="mt-px flex h-[56px] items-center rounded-[8px] bg-[#0f0f0f] pl-[12px] pr-[9px]">
        {ranges.map(([t, w]) => <button key={t} className={`${w} text-center text-[18px] font-medium`}>{t}</button>)}
        <Bar className="ml-[6px]" />
        <button aria-label="Gehe zu" className="flex w-[68px] justify-center">
          <Ico w={1.200}><path d="M3 15V6.500a2.500 2.500 0 012.500-2.500h16A2.500 2.500 0 0124 6.500v16a2.500 2.500 0 01-2.500 2.500H15M3 9.500h21M9.500 1.500V6M17.500 1.500V6M2 21h9.500M8 17l4 4-4 4" /></Ico>
        </button>
        <div className="flex-1" />
        <button className="mr-[18px]">22:30:15 UTC+2</button>
        <button>ETH</button>
        <Bar className="ml-[15px] mr-[15px]" />
        <button>b-adj</button>
        <button aria-label="Einklappen" className="ml-[12px] flex size-[50px] items-center justify-center rounded-[8px] bg-[#3d3d3d]">
          <Ico size="size-[30px]" w={1.500}><path d="M16 5v8h8M4 16h8v8" /></Ico>
        </button>
      </div>
      <div className="mt-[5px] h-[99px] rounded-t-[8px] bg-[#0f0f0f]">
        <div className="flex h-[57px] items-center border-b border-[#333333] pr-[13px]">
          <button className="ml-[9px] h-[50px] w-[130px]">Pine Editor</button>
          <button className="ml-[17px] h-[50px] w-[154px] rounded-[8px] bg-[#3d3d3d]">Trading-Panel</button>
          <div className="flex-1" />
          <button aria-label="Minimieren" className="mr-[28px] mt-[20px]"><Ico size="size-[22px]" w={2}><path d="M1 14h26" /></Ico></button>
          <button aria-label="Maximieren"><Ico size="size-[28px]" w={1.600}><path d="M3 10V6a3 3 0 013-3h16a3 3 0 013 3v4M3 18v4a3 3 0 003 3h16a3 3 0 003-3v-4" /></Ico></button>
        </div>
        <div className="flex justify-end pt-[2px]"><span className="h-[23px] w-[6px] rounded-full bg-[#4a4b5a]" /></div>
      </div>
      <div className="h-[2px] bg-black" />
      <FavouriteBar />
    </div>
  );
}

export default function App() {
  return (
    <div className="flex min-h-screen flex-col bg-[#2e2e2e] font-['Open_Sans',sans-serif]">
      <TabStrip />
      <Toolbar />
      <main className="mt-[6px] flex flex-1">
        <LeftRail />
        <div className="mx-[6px] flex min-w-0 flex-1 flex-col">
          <Chart />
          <BottomArea />
        </div>
        <RightRail />
      </main>
    </div>
  );
}
